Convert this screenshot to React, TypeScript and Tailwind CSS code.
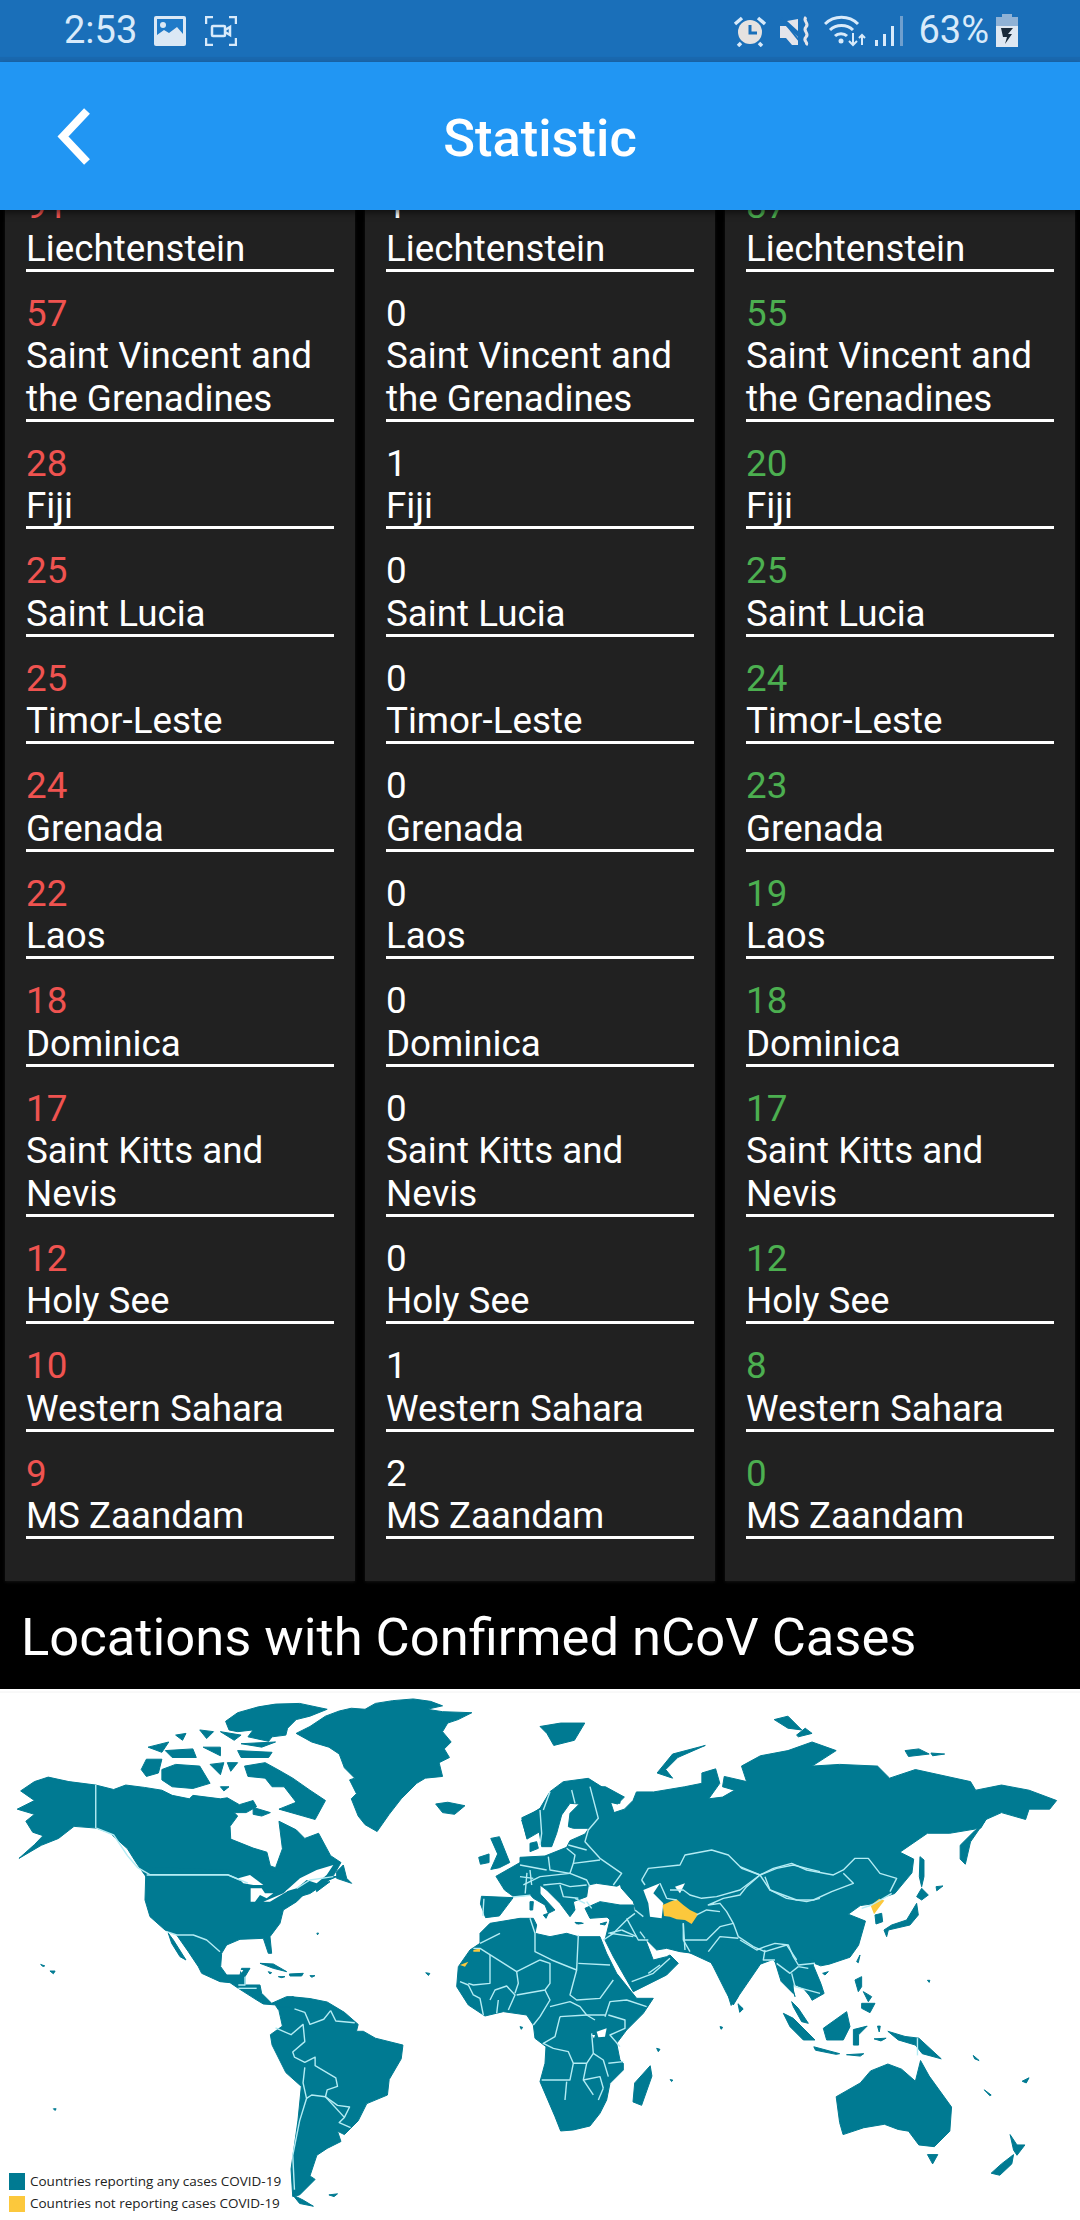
const names = [
  'Liechtenstein', 'Saint Vincent and the Grenadines', 'Fiji', 'Saint Lucia', 'Timor-Leste', 'Grenada',
  'Laos', 'Dominica', 'Saint Kitts and Nevis', 'Holy See', 'Western Sahara', 'MS Zaandam',
];

const columns = [
  { color: 'text-[#ef5350]', values: [91, 57, 28, 25, 25, 24, 22, 18, 17, 12, 10, 9] },
  { color: 'text-white', values: [1, 0, 1, 0, 0, 0, 0, 0, 0, 0, 1, 2] },
  { color: 'text-[#4caf50]', values: [87, 55, 20, 25, 24, 23, 19, 18, 17, 12, 8, 0] },
];

// map shapes, traced in the coordinates of the crop each group was read from
const mapGroups = [
  {
    t: 'translate(0 1680) scale(.3444)',
    land: [
      '60,322 100,295 140,282 200,295 278,305 330,318 365,305 420,312 470,320 500,335 550,345 560,335 640,345 660,342 695,362 735,350 745,368 715,385 680,385 690,395 668,425 670,462 735,488 775,500 785,540 800,545 820,490 810,410 860,435 885,460 925,445 960,510 990,530 970,565 945,590 900,620 800,650 600,640 430,580 395,530 370,490 320,445 280,430 215,425 170,460 120,480 55,518 100,478 125,452 95,442 75,410 100,390 50,375 100,350',
      '710,250 770,240 810,262 850,285 900,320 945,350 915,405 880,395 810,375 860,355 825,310 790,310 770,285 720,280',
      '470,260 510,245 580,250 610,300 560,315 500,310 470,290',
      '410,260 425,230 470,230 460,270 425,280',
      '655,120 690,95 750,78 800,70 870,68 950,85 900,105 860,115 835,140 830,160 790,165 780,178 720,165 735,145 690,150 665,145',
      '430,195 490,180 470,210', '480,205 560,200 570,225 500,225', '580,145 620,150 600,170', '590,195 640,195 640,220',
      '690,205 790,210 780,225 700,225', '700,185 800,180 760,195', '610,245 650,240 640,275', '660,240 690,240 670,265',
      '640,150 700,160 680,175', '510,160 540,155 530,175', '640,310 665,310 650,322', '735,370 785,385 760,395 735,390',
      '860,155 900,135 945,105 985,90 1020,82 1060,85 1090,68 1140,60 1200,55 1250,62 1285,75 1240,85 1285,92 1370,95 1330,115 1300,125 1285,150 1310,180 1290,200 1305,225 1275,240 1285,280 1235,285 1210,300 1165,345 1130,390 1095,440 1060,420 1040,395 1020,345 1035,330 1015,290 1030,285 1000,255 985,215 955,195 905,180',
      '1265,360 1300,355 1350,365 1320,390 1285,385',
      '1425,460 1450,455 1480,530 1450,545 1425,550 1445,505',
      '1390,515 1420,505 1420,530 1395,535',
      '1398,628 1490,632 1450,685 1410,690 1395,650',
      '1440,570 1510,530 1568,515 1568,640 1540,625 1490,628 1465,610',
      '1515,400 1568,375 1568,440 1530,462',
      '800,945 850,920 900,925 950,935 1000,965 1040,1000 1035,1020 1055,1020 1090,1040 1170,1060 1165,1100 1130,1160 1125,1205 1065,1230 1040,1280 1000,1320 980,1310 990,1340 950,1360 920,1380 900,1440 915,1450 870,1495 850,1500 845,1420 865,1280 875,1180 830,1140 790,1060 785,1030 820,1005 810,960',
      '850,1495 880,1510 910,1528 870,1520', '955,1495 980,1492 970,1500',
      '145,845 160,845 155,853', '118,826 130,830 125,832', '1236,850 1248,852 1244,858', '155,1245 163,1245 160,1250', '920,735 925,735 922,740',
    ],
    water: ['815,330 832,325 835,340 820,342'],
    yellow: [],
    lines: [
      '278,305 278,430', '280,430 330,450 370,510 400,545 435,565 660,565 720,590',
      '855,955 885,965 900,1000 940,985 960,960', '960,960 975,990 1030,995', '800,1010 845,1030 880,1000 885,1050 850,1080 855,1095 885,1110 915,1095 915,1120 975,1155 980,1180 950,1190 945,1210 980,1235 1015,1240 1000,1270 985,1285 1018,1300',
      '885,1125 880,1170 890,1215 870,1280 850,1380 855,1480', '890,1215 905,1205 945,1210', '945,1210 1000,1270', '1405,635 1402,685',
      '1530,560 1525,620', '1490,630 1540,625',
    ],
  },
  {
    t: 'translate(130 1860) scale(.3333)',
    land: [
      '48,20 300,30 540,40 620,50 540,85 500,125 460,150 450,190 420,230 425,280 415,280 400,235 330,238 290,255 275,280 272,320 290,345 330,345 335,325 360,325 345,350 345,375 390,375 395,400 425,430 470,410 490,410 480,440 450,440 440,435 400,432 380,420 325,385 300,368 270,365 215,340 205,320 175,275 140,225 105,210 60,170 45,120',
      '620,35 640,15 650,55 665,70 620,55',
      '115,220 130,240 168,300 150,290 125,250',
      '390,310 430,312 470,335 430,325', '445,350 465,350 455,353', '478,342 520,340 515,348 480,348', '540,347 555,347 545,352',
      '555,70 600,65 560,95', '415,335 425,338 420,342',
    ],
    water: [
      '325,55 360,45 400,75 370,75 340,70', '362,85 395,85 405,100 430,100 410,115 390,105 375,125 362,125',
      '400,125 460,100 490,75 470,95 420,125', '465,95 510,55 560,30 610,15 590,45 560,70 530,60 500,85',
      '330,330 340,330 335,338',
    ],
    yellow: [],
    lines: [
      '110,215 140,225 190,225 230,240 270,275', '325,375 345,375 345,350', '325,385 380,385', '50,45 295,45 330,60',
      '500,85 540,60 610,50',
    ],
  },
  {
    t: 'translate(520 1770) scale(.3333)',
    land: [
      '5,150 60,115 90,65 130,35 205,25 300,85 300,100 250,95 280,130 240,130 215,175 160,175 145,170 150,130 178,102 150,100 125,135 110,190 95,230 65,230 55,170 20,200',
      '30,220 50,215 55,235 30,245',
      '0,262 75,258 140,232 150,212 195,192 210,170 300,130 500,130 500,370 340,395 300,350 230,340 205,345 200,380 160,395 165,420 150,440 120,400 80,360 60,345 45,355 105,420 85,430 75,405 40,385 20,360 0,345',
      '195,415 240,395 300,405 340,405 345,435 280,440 210,445',
      '30,395 40,395 38,420 30,420', '70,435 85,430 78,445', '170,458 190,460 175,462',
    ],
    water: [
      '200,395 220,345 265,365 300,345 310,390 340,395 300,400 250,390 210,400',
      '370,360 420,340 400,370 430,400 425,445 390,440 385,400',
      '465,350 495,340 480,370',
    ],
    yellow: ['428,405 450,395 470,388 490,405 510,420 535,432 515,462 495,450 470,448 450,440 432,438'],
    lines: [
      '60,120 65,190 60,225', '90,65 70,120', '155,60 165,100', '210,50 235,145 205,180 195,215 240,265 305,310 280,345',
      '145,225 200,240', '85,260 90,300 150,310 160,280 240,270', '0,285 80,300', '10,345 60,320 150,310', '150,310 200,330 210,350',
      '70,345 120,340 150,350 200,345', '120,345 130,380 175,385', '160,280 165,255 140,235', '30,300 35,345', '0,320 40,325',
      '365,330 385,295 480,285 495,255 575,240 625,255 665,295 720,315', '365,330 375,345', '420,340 440,385 470,390',
      '450,360 490,360 510,375 545,385 590,380 660,360 720,315', '720,315 680,350 660,375 610,385 565,405 600,400 620,425 640,460 655,500 700,530 735,545 800,525 830,570',
      '720,315 770,295 820,285 860,295 900,305', '735,320 750,360 800,385 860,395 900,385', '345,420 370,440',
      '490,460 490,510 510,545', '490,510 560,510 600,470 640,460', '565,545 600,500 655,505', '530,435 560,420 600,425',
      '250,510 280,490 325,445 345,430', '320,445 355,510 385,510', '270,490 340,500', '200,395 215,415', '165,385 195,400',
    ],
  },
  {
    t: 'translate(440 1900) scale(.3333)',
    land: [
      '120,100 150,70 240,55 280,55 290,75 285,100 330,110 380,100 415,110 480,110 500,160 530,220 570,270 590,295 640,295 610,340 560,390 530,430 540,480 550,490 550,510 510,550 500,600 480,640 450,678 400,690 362,693 345,650 300,545 315,490 318,440 285,415 280,375 260,345 190,335 135,348 85,315 50,260 55,200 90,150 120,130',
      '500,50 590,35 640,30 895,0 895,290 880,315 860,280 820,200 800,165 720,155 680,145 650,150 615,115 640,180 680,170 690,165 715,190 680,225 580,275 560,240 520,170 495,120 510,60',
      '405,67 425,69 410,72', '480,72 500,66 495,75',
      '240,380 248,382 244,388', '840,380 848,382 844,388', '650,445 660,448 655,455',
    ],
    water: ['470,395 500,385 495,410 475,412', '455,405 465,405 462,415'],
    yellow: ['60,195 85,185 75,200', '100,150 120,145 120,155 100,155'],
    lines: [
      '120,130 180,100', '100,145 120,145 230,215 300,180', '270,55 285,100 285,155 335,180 410,210 415,105', '415,190 510,195',
      '300,180 330,190 330,250 315,270 230,285', '230,215 235,250 225,280', '150,165 150,250 100,255 85,250', '60,245 85,255 100,285 120,295 130,345',
      '150,300 165,270 200,258 225,285 205,330', '175,300 170,340', '410,210 390,285 410,300 480,295 520,240', '315,270 330,300 300,350 280,375',
      '330,320 390,305 420,320 440,345 495,345', '495,350 510,305 560,300 620,320', '360,350 440,345 465,360', '505,345 555,360 555,385 510,405 540,440',
      '360,350 345,410 310,430 340,445 385,455 400,490 440,490 460,460 455,400', '460,460 490,480 505,530', '400,490 390,540 305,540', '505,490 550,485',
      '440,490 430,540 480,530 490,565', '380,545 375,600', '430,540 460,585', '490,565 475,600', '505,100 545,90', '545,90 590,110',
      '575,245 640,220 690,175', '625,220 660,195', '615,115 600,95', '730,70 735,150',
    ],
  },
  {
    t: 'translate(540 1680) scale(.3444)',
    land: [
      '150,310 190,310 245,340 225,360 205,355 215,385 245,375 270,350 280,325 330,325 420,310 470,300 470,270 510,258 522,300 490,345 530,340 565,320 530,310 535,280 600,295 585,250 640,220 720,205 790,180 860,205 790,250 870,245 980,250 1015,285 1090,260 1250,295 1265,320 1340,305 1420,320 1500,350 1480,375 1420,375 1410,405 1340,385 1295,405 1280,430 1190,445 1125,445 1045,500 1085,520 1080,560 1030,620 1000,630 965,650 930,655 895,680 945,700 925,770 900,805 840,825 815,830 790,820 815,880 825,910 790,930 770,890 735,880 735,910 700,875 680,810 640,825 575,920 555,945 520,830 495,820 430,790 300,750 270,640 150,400',
      '1295,405 1250,470 1235,535 1220,520 1220,480 1260,440 1280,425',
      '340,270 385,215 480,190 400,225 365,260 385,285',
      '0,135 60,125 130,125 100,175 40,190 20,155', '680,115 720,105 760,145 720,140', '745,160 770,140 790,155 750,165',
      '1060,205 1100,200 1130,215 1070,222', '1135,212 1175,215 1140,220',
      '575,940 590,955 580,965', '795,1065 870,1085 860,1087 800,1075', '910,1015 950,1005 925,1030 925,1060 910,1060',
      '890,1088 940,1085 930,1092', '970,1042 1005,1040 990,1048', '980,1005 988,1005 985,1022',
      '1010,1020 1060,1035 1100,1040 1165,1100 1110,1085 1090,1060 1040,1045',
      '860,1210 930,1170 960,1135 1010,1115 1050,1130 1090,1165 1105,1105 1130,1150 1195,1240 1190,1310 1145,1355 1100,1350 1070,1310 1040,1305 1000,1290 940,1300 880,1320 870,1285',
      '1125,1378 1155,1378 1140,1405', '1365,1320 1385,1350 1408,1350 1385,1380 1375,1365', '1375,1378 1370,1405 1335,1438 1310,1432 1340,1405',
      '1290,1190 1310,1205 1306,1207', '1400,1165 1420,1155 1412,1170', '270,1225 275,1170 320,1120 325,1150 295,1235',
      '1258,1090 1275,1105 1262,1100', '378,1160 386,1162 382,1166', '1125,872 1132,872 1130,878', '524,1008 528,1008 526,1012',
      '1150,600 1170,598 1152,612',
    ],
    water: [],
    yellow: ['960,655 985,635 1000,640 985,660 970,680'],
    lines: ['1096,1040 1096,1090'],
  },
  {
    t: 'translate(740 1840) scale(.3333)',
    land: [
      '100,360 155,325 230,365 205,385 245,440 215,475 190,445 155,430 165,470 155,440 130,420 110,370',
      '155,485 175,505 205,550 185,545 160,500', '130,520 160,535 225,600 190,600 150,560',
      '250,565 320,515 330,560 310,600 260,600', '350,365 360,345 355,368', '345,420 365,410 365,440 355,455',
      '365,490 405,490 390,518 365,505', '370,455 395,470 385,485', '248,400 265,395 255,405',
      '432,270 455,255 500,240 530,190 535,225 510,255 445,270 440,290',
      '530,170 545,145 565,165 545,180', '540,50 552,60 552,110 545,140 538,110',
      '405,225 425,220 428,245 408,252', '0,500 8,505 0,515',
    ],
    water: [],
    yellow: [],
    lines: [
      '0,80 60,105 100,85 155,70 200,90 280,105 310,90 345,55 385,55 420,100 470,115 450,155', '60,105 90,150 170,180 220,180 275,155 340,130 310,100',
      '365,205 395,195 430,175 455,160', '0,300 50,330 75,320 105,310 145,315 160,350 175,375 225,370', '75,330 70,360 105,360',
      '110,370 150,400 175,380', '155,400 165,440 240,460', '175,380 205,385',
    ],
  },
];

const StatRow = ({ value, name, color }: { value: number; name: string; color: string }) => (
  <div className="mb-[21px]">
    <p className={`leading-[42.5px] ${color}`}>{value}</p>
    <p className="leading-[42.5px] text-white">{name}</p>
    <div className="-mt-[1.5px] h-[3px] bg-white" />
  </div>
);

const StatusIcons = () => (
  <div className="flex items-center text-[#d8eafa]">
    {/* alarm */}
    <svg width="36" height="32" viewBox="0 0 36 32" className="mr-[11px]">
      <circle cx="18" cy="17" r="12" fill="#e6e2e0" />
      <path d="M18 10v8h7" fill="none" stroke="#1a6fb9" strokeWidth="3" />
      <path d="M3 9l7-6M33 9l-7-6M9 28l-3 3M27 28l3 3" stroke="#d8eafa" strokeWidth="3.5" />
    </svg>
    {/* muted speaker with vibration */}
    <svg width="34" height="32" viewBox="0 0 34 32" className="mr-[11px]">
      <path d="M1 11h6l12 11v8h-6l-6-7H1z M8 6l11 10V4z" fill="#e4e4ea" />
      <path d="M2 3l20 25" stroke="#1a6fb9" strokeWidth="2" />
      <path d="M27 2c-4 4 4 6 0 10s4 6 0 10 3 5 0 8" fill="none" stroke="#e4e4ea" strokeWidth="3" />
    </svg>
    {/* wifi */}
    <svg width="44" height="32" viewBox="0 0 44 32" className="mr-[7px]" fill="none" stroke="#d8eafa" strokeWidth="3">
      <path d="M1 9c9-9 24-9 33 0M6 15c6-6 17-6 23 0M11 21c3-3 9-3 12 0" />
      <circle cx="17" cy="26" r="2.5" fill="#d8eafa" stroke="none" />
      <path d="M29 18v12M25 26l4 4 4-4M38 30V20M35 23l3-3 3 3" strokeWidth="2" />
    </svg>
    {/* signal */}
    <svg width="30" height="32" viewBox="0 0 30 32" className="mr-[13px]" fill="#d8eafa">
      <rect x="0" y="25" width="3" height="6" />
      <rect x="8" y="19" width="3" height="12" />
      <rect x="16" y="11" width="3" height="20" />
      <rect x="25" y="1" width="3" height="30" fill="#6f9fce" />
    </svg>
    <span className="mr-[6px]">63%</span>
    {/* battery */}
    <svg width="24" height="34" viewBox="0 0 24 34">
      <rect x="7" y="0" width="10" height="4" fill="#8fb2d6" />
      <rect x="1" y="3" width="22" height="12" fill="#8fb2d6" />
      <rect x="1" y="12" width="22" height="21" fill="#dfe8f2" />
      <path d="M6 14h12l-5 6h4l-7 10 2-7H8z" fill="#1a2a3a" />
    </svg>
  </div>
);

const WorldMap = () => (
  <svg viewBox="0 1689 1080 531" className="block h-[531px] w-full">
    <line x1="0" y1="1692" x2="1080" y2="1692" stroke="#f2f2f2" strokeWidth="1" />
    {mapGroups.map((g) => (
      <g key={g.t} transform={g.t} fill="#007a92" stroke="#007a92" strokeWidth="1" strokeLinejoin="round">
        {g.land.map((p) => <polygon key={p} points={p} vectorEffect="non-scaling-stroke" />)}
      </g>
    ))}
    {mapGroups.map((g) => (
      <g key={g.t} transform={g.t} fill="#ffffff">
        {g.water.map((p) => <polygon key={p} points={p} />)}
      </g>
    ))}
    {mapGroups.map((g) => (
      <g key={g.t} transform={g.t} fill="#fcc83c">
        {g.yellow.map((p) => <polygon key={p} points={p} />)}
      </g>
    ))}
    {mapGroups.map((g) => (
      <g key={g.t} transform={g.t} fill="none" stroke="#b4ecf4" strokeWidth="1.4" strokeLinejoin="round">
        {g.lines.map((p) => <polyline key={p} points={p} vectorEffect="non-scaling-stroke" />)}
      </g>
    ))}
  </svg>
);

export default function App() {
  return (
    <div className="flex h-[2220px] w-[1080px] flex-col overflow-hidden bg-black font-['Roboto',sans-serif]">
      {/* status bar */}
      <div className="flex h-[62px] items-center justify-between border-b-[5px] border-[#1a69b0] bg-[#1a6fb9] pl-[64px] pr-[61px] pt-[4px] text-[38px] text-[#d8eafa]">
        <div className="flex items-center">
          <span>2:53</span>
          <svg width="32" height="30" viewBox="0 0 32 30" className="ml-[17px]">
            <rect width="32" height="30" rx="2" fill="#dbe8f5" />
            <rect x="3" y="3" width="26" height="22" fill="#1f7ac8" />
            <circle cx="9" cy="9" r="3" fill="#dbe8f5" />
            <path d="M3 25v-6l7-5 5 3 8-6 6 7v7z" fill="#dbe8f5" />
          </svg>
          <svg width="32" height="30" viewBox="0 0 32 30" className="ml-[19px]" fill="none" stroke="#d8eafa" strokeWidth="2.5">
            <path d="M1 8V1h7M24 1h7v7M1 22v7h7M24 29h7v-7" />
            <rect x="7" y="10" width="13" height="10" rx="1" />
            <path d="M20 14l5-3v8l-5-3" />
          </svg>
        </div>
        <StatusIcons />
      </div>

      {/* app bar */}
      <header className="relative z-10 flex h-[148px] items-center justify-center bg-[#2196f3] shadow-[0_3px_6px_rgba(0,0,0,0.5)]">
        <svg width="40" height="60" viewBox="0 0 40 60" className="absolute left-[54px] top-[45px]" fill="none" stroke="#ffffff" strokeWidth="8">
          <path d="M33 4L9 29.5 33 55" />
        </svg>
        <h1 className="mt-[4px] text-[52.5px] font-medium leading-none text-white">Statistic</h1>
      </header>

      {/* tables, scrolled so the first row sits under the app bar */}
      <main className="flex-1 overflow-hidden">
        <div className="-mt-[25px] grid grid-cols-3 gap-[10px] px-[5px] text-[36.75px]">
          {columns.map((col, c) => (
            <div key={c} className="bg-[#212121] px-[21px] pb-[21px] shadow-[0_1px_3px_rgba(255,255,255,0.08)]">
              {names.map((name, i) => (
                <StatRow key={name} name={name} value={col.values[i]} color={col.color} />
              ))}
            </div>
          ))}
        </div>
        <h2 className="flex h-[108px] items-center pl-[21px] pt-[5px] text-[52.5px] leading-none text-white">
          Locations with Confirmed nCoV Cases
        </h2>
        <div className="relative bg-white">
          <WorldMap />
          <div className="absolute left-[9px] top-[484px] flex flex-col gap-[5px] font-['Open_Sans',sans-serif] text-[13.5px] leading-[17px] text-[#222]">
            <div className="flex items-center gap-[5px]">
              <span className="h-[17px] w-[16px] bg-[#007a92]" />
              Countries reporting any cases COVID-19
            </div>
            <div className="flex items-center gap-[5px]">
              <span className="h-[16px] w-[16px] bg-[#fcc83c]" />
              Countries not reporting cases COVID-19
            </div>
          </div>
        </div>
      </main>
    </div>
  );
}
